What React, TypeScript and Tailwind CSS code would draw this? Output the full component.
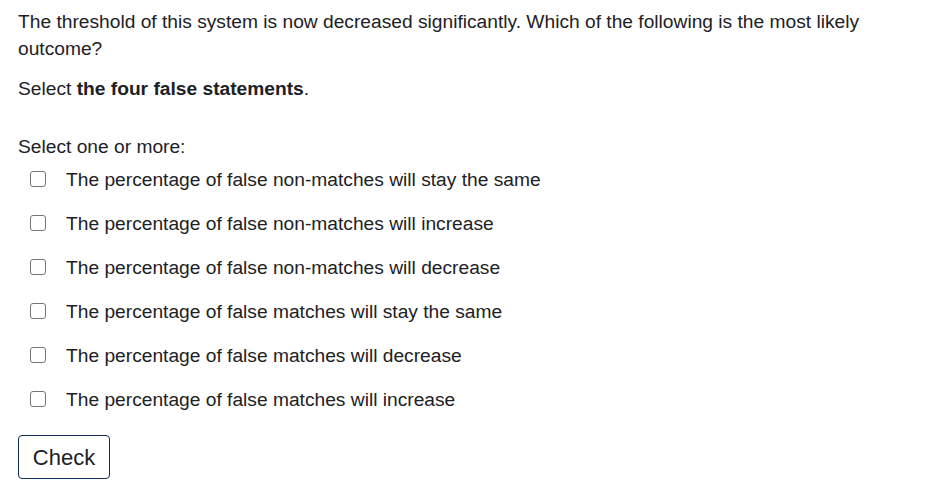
import { useState } from "react";

const options = [
  "The percentage of false non-matches will stay the same",
  "The percentage of false non-matches will increase",
  "The percentage of false non-matches will decrease",
  "The percentage of false matches will stay the same",
  "The percentage of false matches will decrease",
  "The percentage of false matches will increase",
];

export default function App() {
  const [checked, setChecked] = useState<boolean[]>(options.map(() => false));

  const toggle = (i: number) =>
    setChecked((c) => c.map((v, j) => (j === i ? !v : v)));

  return (
    <div className="min-h-[504px] bg-white px-[18px] pt-[8px] font-['Liberation_Sans',Arial,sans-serif] text-[19.2px] leading-[27px] text-[#1d2125]">
      <div className="w-[870px]">
        <p className="mb-[13px]">
          The threshold of this system is now decreased significantly. Which of the following is the most likely outcome?
        </p>
        <p>
          Select <strong className="font-bold">the four false statements</strong>.
        </p>
      </div>

      <fieldset className="mt-[31px]">
        <legend>Select one or more:</legend>
        <div className="-mt-[3px] flex flex-col">
          {options.map((opt, i) => (
            <label key={opt} className="flex h-[44px] cursor-pointer items-center pl-[12px]">
              <input
                type="checkbox"
                checked={checked[i]}
                onChange={() => toggle(i)}
                className="m-0 h-[16px] w-[16px] shrink-0 appearance-none rounded-[3px] border-[1.5px] border-[#767676] bg-white checked:bg-[#0f6cbf]"
              />
              <span className="ml-[20px]">{opt}</span>
            </label>
          ))}
        </div>
      </fieldset>

      <button className="mt-[14px] h-[44px] w-[92px] rounded-[4px] border border-[#0f2d5c] bg-white text-[22px] text-[#1d2125]">
        Check
      </button>
    </div>
  );
}
